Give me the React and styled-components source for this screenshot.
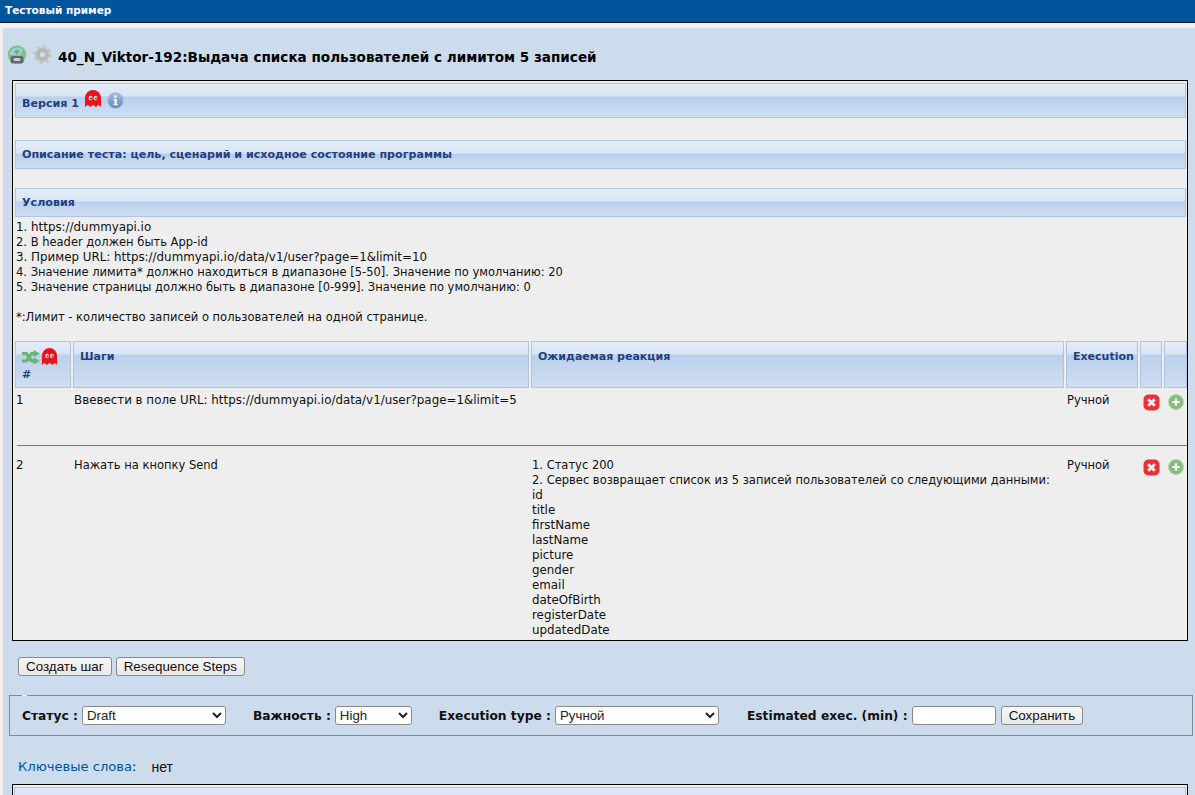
import React from 'react';
import styled, {createGlobalStyle} from 'styled-components';

const FONT = '"DejaVu Sans", Tahoma, sans-serif';
const ARIAL = '"Liberation Sans", Arial, sans-serif';
const BAR_BG = 'linear-gradient(#e4edf8 0, #d9e5f4 12px, #b9d0ec 13px, #cfdef2 100%)';

const GlobalStyle = createGlobalStyle`
  html, body {
    margin: 0;
    padding: 0;
    height: 795px;
    overflow: hidden;
    background: #f3efec;
  }
`;

const TitleBar = styled.div`
  height: 23px;
  box-sizing: border-box;
  background: #00559c;
  border-bottom: 1px solid #0b1a2a;
  color: #fff;
  font: bold 10.5px/21px ${FONT};
  padding-left: 5px;
`;

const Workspace = styled.div`
  margin: 5px 0 0 3px;
  height: 767px;
  background: #ccdcec;
  padding: 18px 2px 0 3px;
  box-sizing: border-box;
  overflow: hidden;
`;

const Heading = styled.h1`
  margin: 0 0 0 1px;
  height: 22px;
  display: flex;
  align-items: center;
  gap: 6px;
  font: bold 13.57px/22px ${FONT};
  color: #000;
`;

const Lift = styled.span`
  display: flex;
  margin-top: ${props => props.$by}px;
`;

const Panel = styled.div`
  margin: 12px 5px 0 6px;
  height: 561px;
  border: 1px solid #000;
  background: #eeeeee;
  padding-top: 2px;
  box-sizing: border-box;
  overflow: hidden;
`;

const SectionBar = styled.div`
  margin: 0 1px 0 2px;
  height: 29px;
  box-sizing: border-box;
  border: 1px solid #aec4e0;
  background: ${BAR_BG};
  color: #1f3f80;
  font: bold 11.1px/27px ${FONT};
  padding-left: 6px;
  display: flex;
  align-items: center;
  gap: 5px;
`;

const VersionBar = styled(SectionBar)`
  height: 35px;
  padding-top: 6px;
`;

const Gap = styled.div`
  height: ${props => props.$h}px;
`;

const Notes = styled.div`
  font: 11.86px/15px ${FONT};
  color: #111;
  padding: 3px 0 0 3px;
  height: 121px;
  white-space: pre;
`;

// russian text runs narrower in the reference font than latin does
const Line = styled.div`
  min-height: 15px;
  font-size: ${props => props.$ru ? '11.5px' : 'inherit'};
`;

const RuText = styled.span`
  font-size: 11.5px;
`;

const StepsHead = styled.div`
  display: grid;
  grid-template-columns: 56px 456px 533px 72px 22px 23px;
  gap: 2px;
  margin-left: 2px;
  height: 47px;
`;

const HeadCell = styled.div`
  box-sizing: border-box;
  border: 1px solid #aec4e0;
  background: ${BAR_BG};
  color: #1f3f80;
  font: bold 11px/15px ${FONT};
  padding: 7px 0 0 6px;
`;

const IconHeadCell = styled(HeadCell)`
  padding-top: 6px;
`;

const IconRow = styled.div`
  display: flex;
  align-items: center;
  gap: 1px;
  height: 18px;
  margin-bottom: 1px;
`;

const StepRow = styled.div`
  display: grid;
  grid-template-columns: 58px 458px 535px 75px 25px 23px;
  margin-left: 3px;
  height: ${props => props.$h}px;
  font: 11.86px/15px ${FONT};
  color: #111;
  padding-top: ${props => props.$top}px;
  box-sizing: border-box;
`;

const Divider = styled.hr`
  margin: 0 0 0 4px;
  width: 1172px;
  height: 1px;
  border: 0;
  background: #777;
`;

const ActionCell = styled.div`
  padding: 1px 0 0 1px;
`;

const ButtonRow = styled.div`
  display: flex;
  gap: 4px;
  margin: 16px 0 0 12px;
  height: 20px;
`;

const Btn = styled.button`
  height: 19px;
  box-sizing: border-box;
  padding: 0 7px;
  border: 1px solid #8a8a8a;
  border-radius: 3px;
  background: linear-gradient(#f8f8f8, #e8e8e8);
  color: #111;
  font: 13.4px/17px ${ARIAL};
`;

const FormBar = styled.div`
  position: relative;
  margin: 18px 0 0 3px;
  width: 1184px;
  height: 41px;
  box-sizing: border-box;
  border: 1px solid #7e8a94;
  display: flex;
  align-items: center;
  padding-left: 12px;

  &::before {
    content: '';
    position: absolute;
    top: -1px;
    left: 12px;
    width: 5px;
    height: 1px;
    background: #e6edf4;
  }
`;

const Label = styled.label`
  font: bold 12.25px/16px ${FONT};
  color: #111;
  margin-right: 4px;
  margin-left: ${props => props.$ml || 0}px;
`;

const Select = styled.select`
  width: ${props => props.$w}px;
  height: 19px;
  box-sizing: border-box;
  border: 1px solid #8a8a8a;
  border-radius: 3px;
  background: #fff;
  color: #222;
  font: 13.3px ${ARIAL};
`;

const TextField = styled.input`
  width: 84px;
  height: 19px;
  box-sizing: border-box;
  border: 1px solid #8a8a8a;
  border-radius: 3px;
  background: #fff;
  margin-right: 5px;
`;

const Keywords = styled.div`
  margin: 22px 0 0 12px;
  height: 18px;
  font: 14px/18px ${ARIAL};
  color: #111;
  display: flex;
  gap: 15px;
`;

const KeywordLabel = styled.span`
  font-family: ${FONT};
  font-size: 13.1px;
`;

const KeywordName = styled.span`
  color: #00559c;
`;

const BottomPanel = styled.div`
  margin: 8px 5px 0 6px;
  height: 11px;
  border: 1px solid #000;
  border-bottom: 0;
  background: #eeeeee;
  padding: 2px 1px 0;
  box-sizing: border-box;
`;

const BottomBar = styled.div`
  height: 8px;
  border: 1px solid #aec4e0;
  border-bottom: 0;
  background: #dce8f6;
`;

const Ghost = ({w = 18, h = 18}) => (
  <svg width={w} height={h} viewBox="0 0 18 18" preserveAspectRatio="none">
    <path d="M1 17V8a8 8 0 0 1 16 0v9l-2.700-2.200L12 17l-3-2.200L6 17l-2.300-2.200z" fill="#e8141c" />
    <ellipse cx="6.500" cy="8" rx="1.900" ry="2.200" fill="#f4d8d8" />
    <ellipse cx="11.500" cy="8" rx="1.900" ry="2.200" fill="#f4d8d8" />
    <circle cx="7" cy="8.400" r=".9" fill="#722" />
    <circle cx="12" cy="8.400" r=".9" fill="#722" />
  </svg>
);

const InfoIcon = () => (
  <svg width="17" height="17" viewBox="0 0 17 17">
    <defs>
      <linearGradient id="infoFill" x1="0" y1="0" x2="0" y2="1">
        <stop offset="0" stopColor="#a9c0de" />
        <stop offset="1" stopColor="#5f86bc" />
      </linearGradient>
    </defs>
    <circle cx="8.500" cy="8.500" r="8" fill="url(#infoFill)" stroke="#b4c8e2" />
    <rect x="7.300" y="3.400" width="2.400" height="2.200" fill="#fff" />
    <path d="M6.600 7h3.100v5h1v1.200H6.600V12h.9V8.200h-.9z" fill="#fff" />
  </svg>
);

const HomeIcon = () => (
  <svg width="20" height="19" viewBox="0 0 20 19">
    <circle cx="10" cy="9.500" r="9.200" fill="#7cc47e" />
    <path d="M3 10a7.500 7.500 0 0 1 13-5l-3 5z" fill="#9fd2e6" />
    <path d="M7 6l4-2 2 3-4 3z" fill="#6cb878" />
    <rect x="3.500" y="11" width="13" height="7.500" rx="2.500" fill="#5f6670" />
    <rect x="6.500" y="13" width="7" height="3" rx="1.500" fill="#c8ced4" />
  </svg>
);

const GearIcon = () => (
  <svg width="19" height="19" viewBox="0 0 20 20">
    <circle cx="10" cy="10" r="5" fill="none" stroke="#b8b8b8" strokeWidth="4.500" />
    <circle cx="10" cy="10" r="8.300" fill="none" stroke="#c4c4c4" strokeWidth="3.400" strokeDasharray="3.200 3.320" />
  </svg>
);

const ShuffleIcon = () => (
  <svg width="18" height="15" viewBox="0 0 18 15">
    <path d="M0 3.500h4.500l5 7.500h3M0 11h4.500l5-7.500h3" fill="none" stroke="#6cb56e" strokeWidth="3.200" />
    <path d="M11.500 0l6.500 3.500-6.500 3.500zM11.500 7.500l6.500 3.500-6.500 3.500z" fill="#6cb56e" />
  </svg>
);

const DeleteIcon = () => (
  <svg width="17" height="17" viewBox="0 0 17 17">
    <rect x=".5" y=".5" width="16" height="16" rx="5" fill="#ea2f37" />
    <path d="M5.200 5.200l6.600 6.600M11.800 5.200l-6.600 6.600" stroke="#fbeaea" strokeWidth="3" />
  </svg>
);

const AddIcon = () => (
  <svg width="16" height="16" viewBox="0 0 16 16">
    <circle cx="8" cy="8" r="7.500" fill="#86bd7e" stroke="#b4d4ac" />
    <path d="M8 4.200v7.600M4.200 8h7.600" stroke="#f2f8f0" strokeWidth="2.200" />
  </svg>
);

const CONDITIONS = [
  {text: '1. https://dummyapi.io'},
  {text: '2. В header должен быть App-id', ru: true},
  {text: '3. Пример URL: https://dummyapi.io/data/v1/user?page=1&limit=10'},
  {text: '4. Значение лимита* должно находиться в диапазоне [5-50]. Значение по умолчанию: 20', ru: true},
  {text: '5. Значение страницы должно быть в диапазоне [0-999]. Значение по умолчанию: 0', ru: true},
  {text: ''},
  {text: '*:Лимит - количество записей о пользователей на одной странице.', ru: true}
];

const REACTION = [
  {text: '1. Статус 200', ru: true},
  {text: '2. Сервес возвращает список из 5 записей пользователей со следующими данными:', ru: true},
  {text: 'id'}, {text: 'title'}, {text: 'firstName'}, {text: 'lastName'}, {text: 'picture'},
  {text: 'gender'}, {text: 'email'}, {text: 'dateOfBirth'}, {text: 'registerDate'}, {text: 'updatedDate'}
];

const App = () => (
  <>
    <GlobalStyle />
    <TitleBar>Тестовый пример</TitleBar>
    <Workspace>
      <Heading>
        <Lift $by={-6}><HomeIcon /></Lift>
        <Lift $by={-5}><GearIcon /></Lift>
        40_N_Viktor-192:Выдача списка пользователей с лимитом 5 записей
      </Heading>
      <Panel>
        <VersionBar>
          Версия 1
          <Lift $by={-9}><Ghost /></Lift>
          <Lift $by={-7}><InfoIcon /></Lift>
        </VersionBar>
        <Gap $h={22} />
        <SectionBar>Описание теста: цель, сценарий и исходное состояние программы</SectionBar>
        <Gap $h={19} />
        <SectionBar>Условия</SectionBar>
        <Notes>
          {CONDITIONS.map((line, i) => <Line key={i} $ru={line.ru}>{line.text}</Line>)}
        </Notes>
        <StepsHead>
          <IconHeadCell>
            <IconRow><ShuffleIcon /><Ghost w={17} /></IconRow>
            #
          </IconHeadCell>
          <HeadCell>Шаги</HeadCell>
          <HeadCell>Ожидаемая реакция</HeadCell>
          <HeadCell>Execution</HeadCell>
          <HeadCell />
          <HeadCell />
        </StepsHead>
        <StepRow $h={57} $top={5}>
          <span>1</span>
          <span>Ввевести в поле URL: https://dummyapi.io/data/v1/user?page=1&amp;limit=5</span>
          <span />
          <RuText>Ручной</RuText>
          <ActionCell><DeleteIcon /></ActionCell>
          <ActionCell><AddIcon /></ActionCell>
        </StepRow>
        <Divider />
        <StepRow $h={200} $top={12}>
          <span>2</span>
          <RuText>Нажать на кнопку Send</RuText>
          <div>{REACTION.map((line, i) => <Line key={i} $ru={line.ru}>{line.text}</Line>)}</div>
          <RuText>Ручной</RuText>
          <ActionCell><DeleteIcon /></ActionCell>
          <ActionCell><AddIcon /></ActionCell>
        </StepRow>
      </Panel>
      <ButtonRow>
        <Btn>Создать шаг</Btn>
        <Btn>Resequence Steps</Btn>
      </ButtonRow>
      <FormBar>
        <Label>Статус :</Label>
        <Select $w={144} defaultValue="Draft"><option>Draft</option></Select>
        <Label $ml={27}>Важность :</Label>
        <Select $w={77} defaultValue="High"><option>High</option></Select>
        <Label $ml={27}>Execution type :</Label>
        <Select $w={164} defaultValue="Ручной"><option>Ручной</option></Select>
        <Label $ml={28}>Estimated exec. (min) :</Label>
        <TextField />
        <Btn>Сохранить</Btn>
      </FormBar>
      <Keywords>
        <KeywordLabel><KeywordName>Ключевые слова</KeywordName>:</KeywordLabel>
        нет
      </Keywords>
      <BottomPanel><BottomBar /></BottomPanel>
    </Workspace>
  </>
);

export default App;
